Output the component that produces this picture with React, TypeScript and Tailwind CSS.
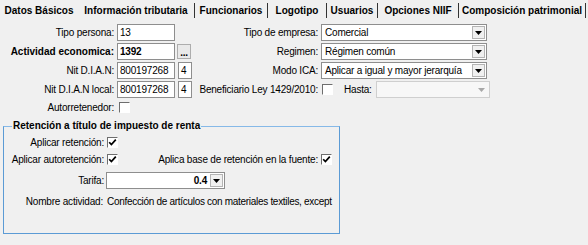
import type { ReactNode } from 'react';

// ── Kleine Win32-artige Bausteine ─────────────────────────────────

function Arrow({ disabled = false }: { disabled?: boolean }) {
  return (
    <svg width="7" height="4" viewBox="0 0 7 4">
      <polygon points="0,0 7,0 3.5,4" fill={disabled ? '#a8a8a8' : '#000'} />
    </svg>
  );
}

function TextBox({ value, width, bold = false }: { value: string; width: string; bold?: boolean }) {
  return (
    <div
      className={`${width} h-[17px] border border-[#8e8e8e] bg-white px-[2px] leading-[15px] whitespace-nowrap overflow-hidden ${bold ? 'font-bold' : ''}`}
    >
      {value}
    </div>
  );
}

function Combo({
  value,
  width,
  bold = false,
  alignRight = false,
  disabled = false,
}: {
  value: string;
  width: string;
  bold?: boolean;
  alignRight?: boolean;
  disabled?: boolean;
}) {
  return (
    <div
      className={`${width} h-[17px] flex items-stretch border ${disabled ? 'border-[#cfcfcf] bg-[#f7f7f7]' : 'border-[#8e8e8e] bg-white'}`}
    >
      <div
        className={`flex-1 px-[3px] leading-[15px] whitespace-nowrap overflow-hidden ${bold ? 'font-bold' : ''} ${alignRight ? 'text-right' : ''}`}
      >
        {value}
      </div>
      <div
        className={`my-px mr-px w-[13px] flex items-center justify-center ${disabled ? '' : 'border border-[#b4b4b4] bg-[#f0f0f0]'}`}
      >
        <Arrow disabled={disabled} />
      </div>
    </div>
  );
}

function CheckBox({ checked = false }: { checked?: boolean }) {
  return (
    <div className="w-[11px] h-[11px] border border-t-[#6e6e6e] border-l-[#6e6e6e] border-r-white border-b-white bg-white flex items-center justify-center">
      {checked && (
        <svg width="9" height="9" viewBox="0 0 9 9">
          <path d="M1.2 4.2 L3.4 6.6 L7.8 1.6" stroke="#000" strokeWidth="1.7" fill="none" />
        </svg>
      )}
    </div>
  );
}

function Row({ children, className = '' }: { children: ReactNode; className?: string }) {
  return <div className={`flex items-center h-[17px] ${className}`}>{children}</div>;
}

// ── Reiter ─────────────────────────────────────────────────────────

const tabs = [
  { label: 'Datos Básicos', w: 'w-[78px]', sep: false },
  { label: 'Información tributaria', w: 'w-[116px]', sep: true },
  { label: 'Funcionarios', w: 'w-[72px]', sep: true },
  { label: 'Logotipo', w: 'w-[58px]', sep: true },
  { label: 'Usuarios', w: 'w-[50px]', sep: true },
  { label: 'Opciones NIIF', w: 'w-[80px]', sep: true },
  { label: 'Composición patrimonial', w: 'w-[126px]', sep: true },
];

export default function App() {
  return (
    <div
      className="w-[588px] h-[245px] overflow-hidden bg-[#f0f0f0] text-[10px] text-black"
      style={{ fontFamily: '"Liberation Sans", Arial, sans-serif' }}
    >
      {/* Reiterleiste */}
      <div className="flex h-[20px] items-center font-bold">
        {tabs.map((t) => (
          <div key={t.label} className="flex items-center">
            <div className={`${t.w} text-center whitespace-nowrap`}>{t.label}</div>
            {t.sep && <div className="w-px h-[15px] bg-[#333]" />}
          </div>
        ))}
      </div>

      {/* Kopfbereich */}
      <div className="tracking-[-0.2px]">
        <Row className="mt-[4px]">
          <div className="w-[200px] flex items-center">
            <div className="w-[114px] text-right">Tipo persona:</div>
            <div className="ml-[3px]">
              <TextBox value="13" width="w-[58px]" />
            </div>
          </div>
          <div className="w-[118px] text-right whitespace-nowrap">Tipo de empresa:</div>
          <div className="ml-[3px]">
            <Combo value="Comercial" width="w-[166px]" />
          </div>
        </Row>

        <Row className="mt-[2px]">
          <div className="w-[200px] flex items-center">
            <div className="w-[114px] text-right font-bold tracking-normal whitespace-nowrap">Actividad economica:</div>
            <div className="ml-[3px]">
              <TextBox value="1392" width="w-[58px]" bold />
            </div>
            <div className="ml-[2px] w-[14px] h-[15px] border border-[#adadad] bg-[#e9e9e9] flex items-end justify-center leading-[10px] font-bold">
              ...
            </div>
          </div>
          <div className="w-[118px] text-right">Regimen:</div>
          <div className="ml-[3px]">
            <Combo value="Régimen común" width="w-[166px]" />
          </div>
        </Row>

        <Row className="mt-[2px]">
          <div className="w-[200px] flex items-center">
            <div className="w-[114px] text-right">Nit D.I.A.N:</div>
            <div className="ml-[3px]">
              <TextBox value="800197268" width="w-[58px]" />
            </div>
            <div className="ml-[3px]">
              <TextBox value="4" width="w-[14px]" />
            </div>
          </div>
          <div className="w-[118px] text-right">Modo ICA:</div>
          <div className="ml-[3px]">
            <Combo value="Aplicar a igual y mayor jerarquía" width="w-[166px]" />
          </div>
        </Row>

        <Row className="mt-[2px]">
          <div className="w-[200px] flex items-center">
            <div className="w-[114px] text-right">Nit D.I.A.N local:</div>
            <div className="ml-[3px]">
              <TextBox value="800197268" width="w-[58px]" />
            </div>
            <div className="ml-[3px]">
              <TextBox value="4" width="w-[14px]" />
            </div>
          </div>
          <div className="w-[118px] flex justify-end whitespace-nowrap">Beneficiario Ley 1429/2010:</div>
          <div className="ml-[4px]">
            <CheckBox />
          </div>
          <div className="ml-[11px]">Hasta:</div>
          <div className="ml-[4px]">
            <Combo value="" width="w-[114px]" disabled />
          </div>
        </Row>

        <Row className="mt-px">
          <div className="w-[114px] text-right">Autorretenedor:</div>
          <div className="ml-[5px]">
            <CheckBox />
          </div>
        </Row>
      </div>

      {/* Gruppe Retención */}
      <fieldset className="ml-[3px] mt-[4px] w-[337px] h-[114px] border border-[#5b9bd5] border-t-[#86b9e8]">
        <legend className="ml-[8px] px-[1px] font-bold leading-[12px]">Retención a título de impuesto de renta</legend>

        <div className="tracking-[-0.2px]">
          <Row className="mt-[2px]">
            <div className="w-[100px] text-right">Aplicar retención:</div>
            <div className="ml-[3px]">
              <CheckBox checked />
            </div>
          </Row>

          <Row>
            <div className="w-[100px] text-right whitespace-nowrap">Aplicar autoretención:</div>
            <div className="ml-[3px]">
              <CheckBox checked />
            </div>
            <div className="w-[200px] text-right whitespace-nowrap">Aplica base de retención en la fuente:</div>
            <div className="ml-[3px]">
              <CheckBox checked />
            </div>
          </Row>

          <Row className="mt-[4px]">
            <div className="w-[100px] text-right">Tarifa:</div>
            <div className="ml-[2px]">
              <Combo value="0.4" width="w-[119px]" bold alignRight />
            </div>
          </Row>

          <Row className="mt-[4px]">
            <div className="w-[99px] text-right whitespace-nowrap">Nombre actividad:</div>
            <div className="ml-[4px] whitespace-nowrap tracking-[-0.3px]">
              Confección de artículos con materiales textiles, except
            </div>
          </Row>
        </div>
      </fieldset>
    </div>
  );
}
